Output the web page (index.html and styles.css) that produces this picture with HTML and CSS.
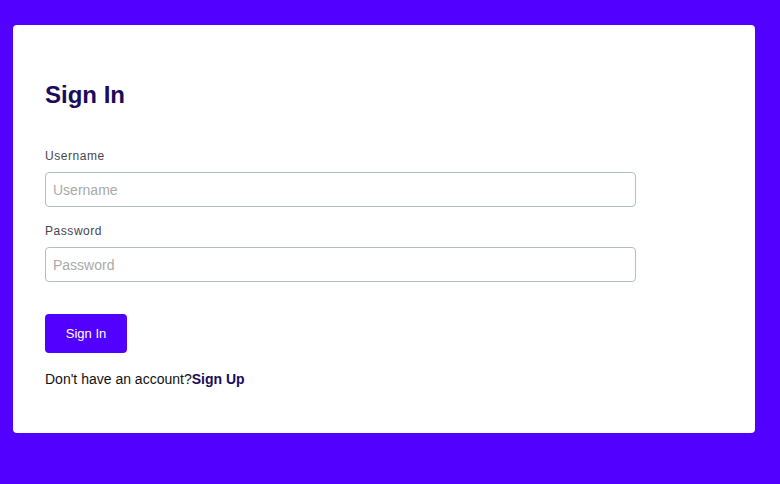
FILE: index.html
```html
<!DOCTYPE html>
<html lang="en">
<head>
<meta charset="utf-8">
<title>Sign In</title>
<link rel="stylesheet" href="styles.css">
</head>
<body>
<div class="page">
  <main class="card">
    <h1 class="title">Sign In</h1>
    <form class="form">
      <div class="field">
        <label class="label" for="username">Username</label>
        <input class="input" id="username" type="text" placeholder="Username">
      </div>
      <div class="field">
        <label class="label" for="password">Password</label>
        <input class="input" id="password" type="password" placeholder="Password">
      </div>
      <button class="button" type="button">Sign In</button>
    </form>
    <p class="footer">Don't have an account?<a class="link" href="#">Sign Up</a></p>
  </main>
</div>
</body>
</html>
```
FILE: styles.css
```css
html, body {
  margin: 0;
  padding: 0;
  background: #5200ff;
  font-family: "Liberation Sans", Arial, sans-serif;
}
.page {
  padding: 25px 25px 51px 13px;
}
.card {
  background: #ffffff;
  border-radius: 4px;
  padding: 32px 32px 46px 32px;
}
.title {
  margin: 24px 0 0 0;
  font-size: 24px;
  line-height: 28px;
  font-weight: bold;
  color: #1a0b5b;
}
.form {
  margin-top: 40px;
  display: flex;
  flex-direction: column;
}
.field {
  display: flex;
  flex-direction: column;
  margin-bottom: 17px;
}
.field + .field {
  margin-bottom: 0;
}
.label {
  font-size: 12px;
  line-height: 14px;
  letter-spacing: 0.55px;
  color: #45454f;
  margin-bottom: 9px;
}
.input {
  box-sizing: border-box;
  width: 591px;
  height: 35px;
  border: 1px solid #b3bfbf;
  border-radius: 4px;
  padding: 0 7px;
  font-family: "Liberation Sans", Arial, sans-serif;
  font-size: 14px;
  color: #222;
  outline: none;
}
.input::placeholder {
  color: #a9a9a9;
}
.button {
  align-self: flex-start;
  margin-top: 32px;
  width: 82px;
  height: 39px;
  border: none;
  border-radius: 4px;
  background: #5200ff;
  color: #ffffff;
  font-family: "Liberation Sans", Arial, sans-serif;
  font-size: 13px;
  padding: 0;
}
.footer {
  margin: 18px 0 0 0;
  font-size: 14px;
  line-height: 16px;
  color: #111;
}
.link {
  font-weight: bold;
  color: #1a0b5b;
  text-decoration: none;
}
```
